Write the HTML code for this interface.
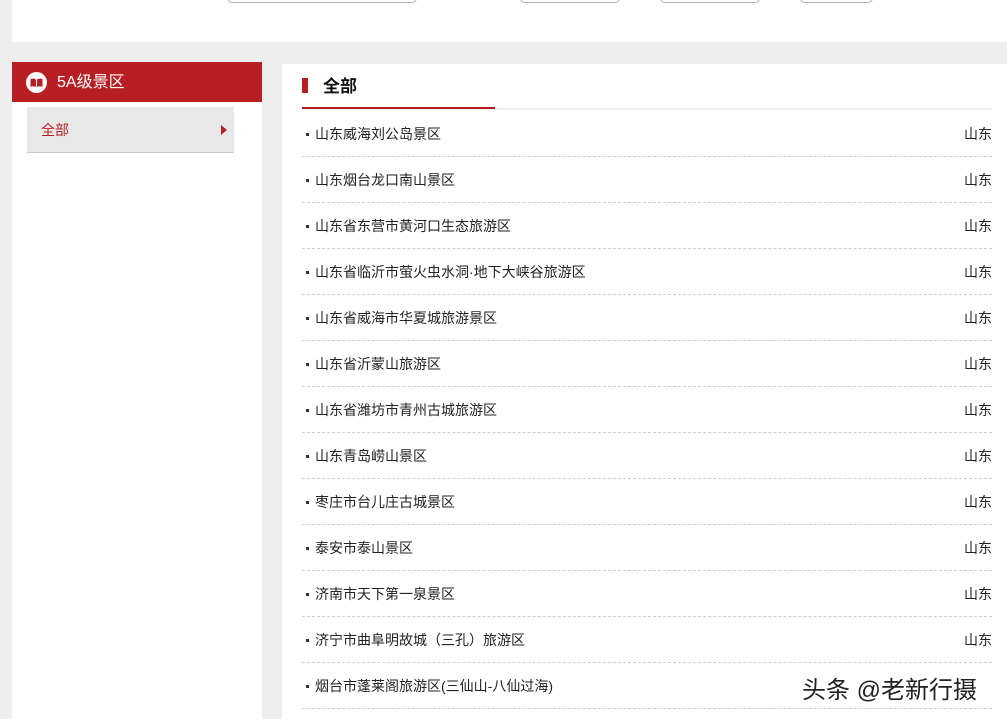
<!DOCTYPE html>
<html><head><meta charset="utf-8"><style>
*{margin:0;padding:0;box-sizing:border-box}
body{width:1007px;height:719px;overflow:hidden;background:#eeeeee;font-family:"Liberation Sans","Noto Sans CJK SC",sans-serif;position:relative}
.abs{position:absolute}
.top{left:12px;top:0;width:995px;height:42px;background:#fff}
.btn{top:-8px;height:11px;border:1px solid #aab4c0;border-radius:5px;background:#fff}
.left{left:12px;top:62px;width:250px;height:657px;background:#fff}
.lh{left:12px;top:62px;width:250px;height:40px;background:#b81f22;color:#fff;font-size:16px;line-height:42px;padding-left:45px}
.icon{left:26px;top:72px;width:21px;height:21px;border-radius:50%;background:#fff}
.mi{left:27px;top:107px;width:207px;height:46px;background:#e8e8e8;border-bottom:1px solid #ccc;color:#b81f22;font-size:14px;line-height:46px;padding-left:14px}
.tri{left:221px;top:125px;width:0;height:0;border-left:6px solid #b81f22;border-top:5px solid transparent;border-bottom:5px solid transparent}
.right{left:282px;top:64px;width:725px;height:655px;background:#fff}
.title{left:323px;top:72px;font-size:17px;font-weight:bold;color:#111}
.bar{left:302px;top:78px;width:6px;height:15px;background:#b81f22}
.gl{left:302px;top:108px;width:690px;height:2px;background:#eee}
.rl{left:302px;top:107px;width:193px;height:2px;background:#b81f22}
.row{left:302px;width:690px;height:46px;border-bottom:1px dashed #ccc;font-size:14px;color:#222;line-height:46px}
.row .d{position:absolute;left:4px;top:22px;width:3px;height:3px;background:#333}
.row .n{position:absolute;left:13px}
.row .p{position:absolute;right:0}
.wm{left:802px;top:670px;font-size:24px;color:#222;text-shadow:1px 1px 0 #fff,-1px -1px 0 #fff}
</style></head><body>
<div class="abs top"></div>
<div class="abs btn" style="left:227px;width:190px"></div>
<div class="abs btn" style="left:520px;width:100px"></div>
<div class="abs btn" style="left:660px;width:100px"></div>
<div class="abs btn" style="left:800px;width:73px"></div>
<div class="abs left"></div>
<div class="abs lh">5A级景区</div>
<div class="abs icon"><svg width="21" height="21" viewBox="0 0 21 21"><path d="M4.5 7 Q7.5 6 10 7.5 V15 Q7.5 13.8 4.5 14.8Z M16.5 7 Q13.5 6 11 7.5 V15 Q13.5 13.8 16.5 14.8Z" fill="#b81f22"/></svg></div>
<div class="abs mi">全部</div>
<div class="abs tri"></div>
<div class="abs right"></div>
<div class="abs bar"></div>
<div class="abs title">全部</div>
<div class="abs gl"></div>
<div class="abs rl"></div>
<div class="abs row" style="top:111px"><i class="d"></i><span class="n">山东威海刘公岛景区</span><span class="p">山东</span></div>
<div class="abs row" style="top:157px"><i class="d"></i><span class="n">山东烟台龙口南山景区</span><span class="p">山东</span></div>
<div class="abs row" style="top:203px"><i class="d"></i><span class="n">山东省东营市黄河口生态旅游区</span><span class="p">山东</span></div>
<div class="abs row" style="top:249px"><i class="d"></i><span class="n">山东省临沂市萤火虫水洞·地下大峡谷旅游区</span><span class="p">山东</span></div>
<div class="abs row" style="top:295px"><i class="d"></i><span class="n">山东省威海市华夏城旅游景区</span><span class="p">山东</span></div>
<div class="abs row" style="top:341px"><i class="d"></i><span class="n">山东省沂蒙山旅游区</span><span class="p">山东</span></div>
<div class="abs row" style="top:387px"><i class="d"></i><span class="n">山东省潍坊市青州古城旅游区</span><span class="p">山东</span></div>
<div class="abs row" style="top:433px"><i class="d"></i><span class="n">山东青岛崂山景区</span><span class="p">山东</span></div>
<div class="abs row" style="top:479px"><i class="d"></i><span class="n">枣庄市台儿庄古城景区</span><span class="p">山东</span></div>
<div class="abs row" style="top:525px"><i class="d"></i><span class="n">泰安市泰山景区</span><span class="p">山东</span></div>
<div class="abs row" style="top:571px"><i class="d"></i><span class="n">济南市天下第一泉景区</span><span class="p">山东</span></div>
<div class="abs row" style="top:617px"><i class="d"></i><span class="n">济宁市曲阜明故城（三孔）旅游区</span><span class="p">山东</span></div>
<div class="abs row" style="top:663px"><i class="d"></i><span class="n">烟台市蓬莱阁旅游区(三仙山-八仙过海)</span></div>
<div class="abs wm">头条 @老新行摄</div>
</body></html>
